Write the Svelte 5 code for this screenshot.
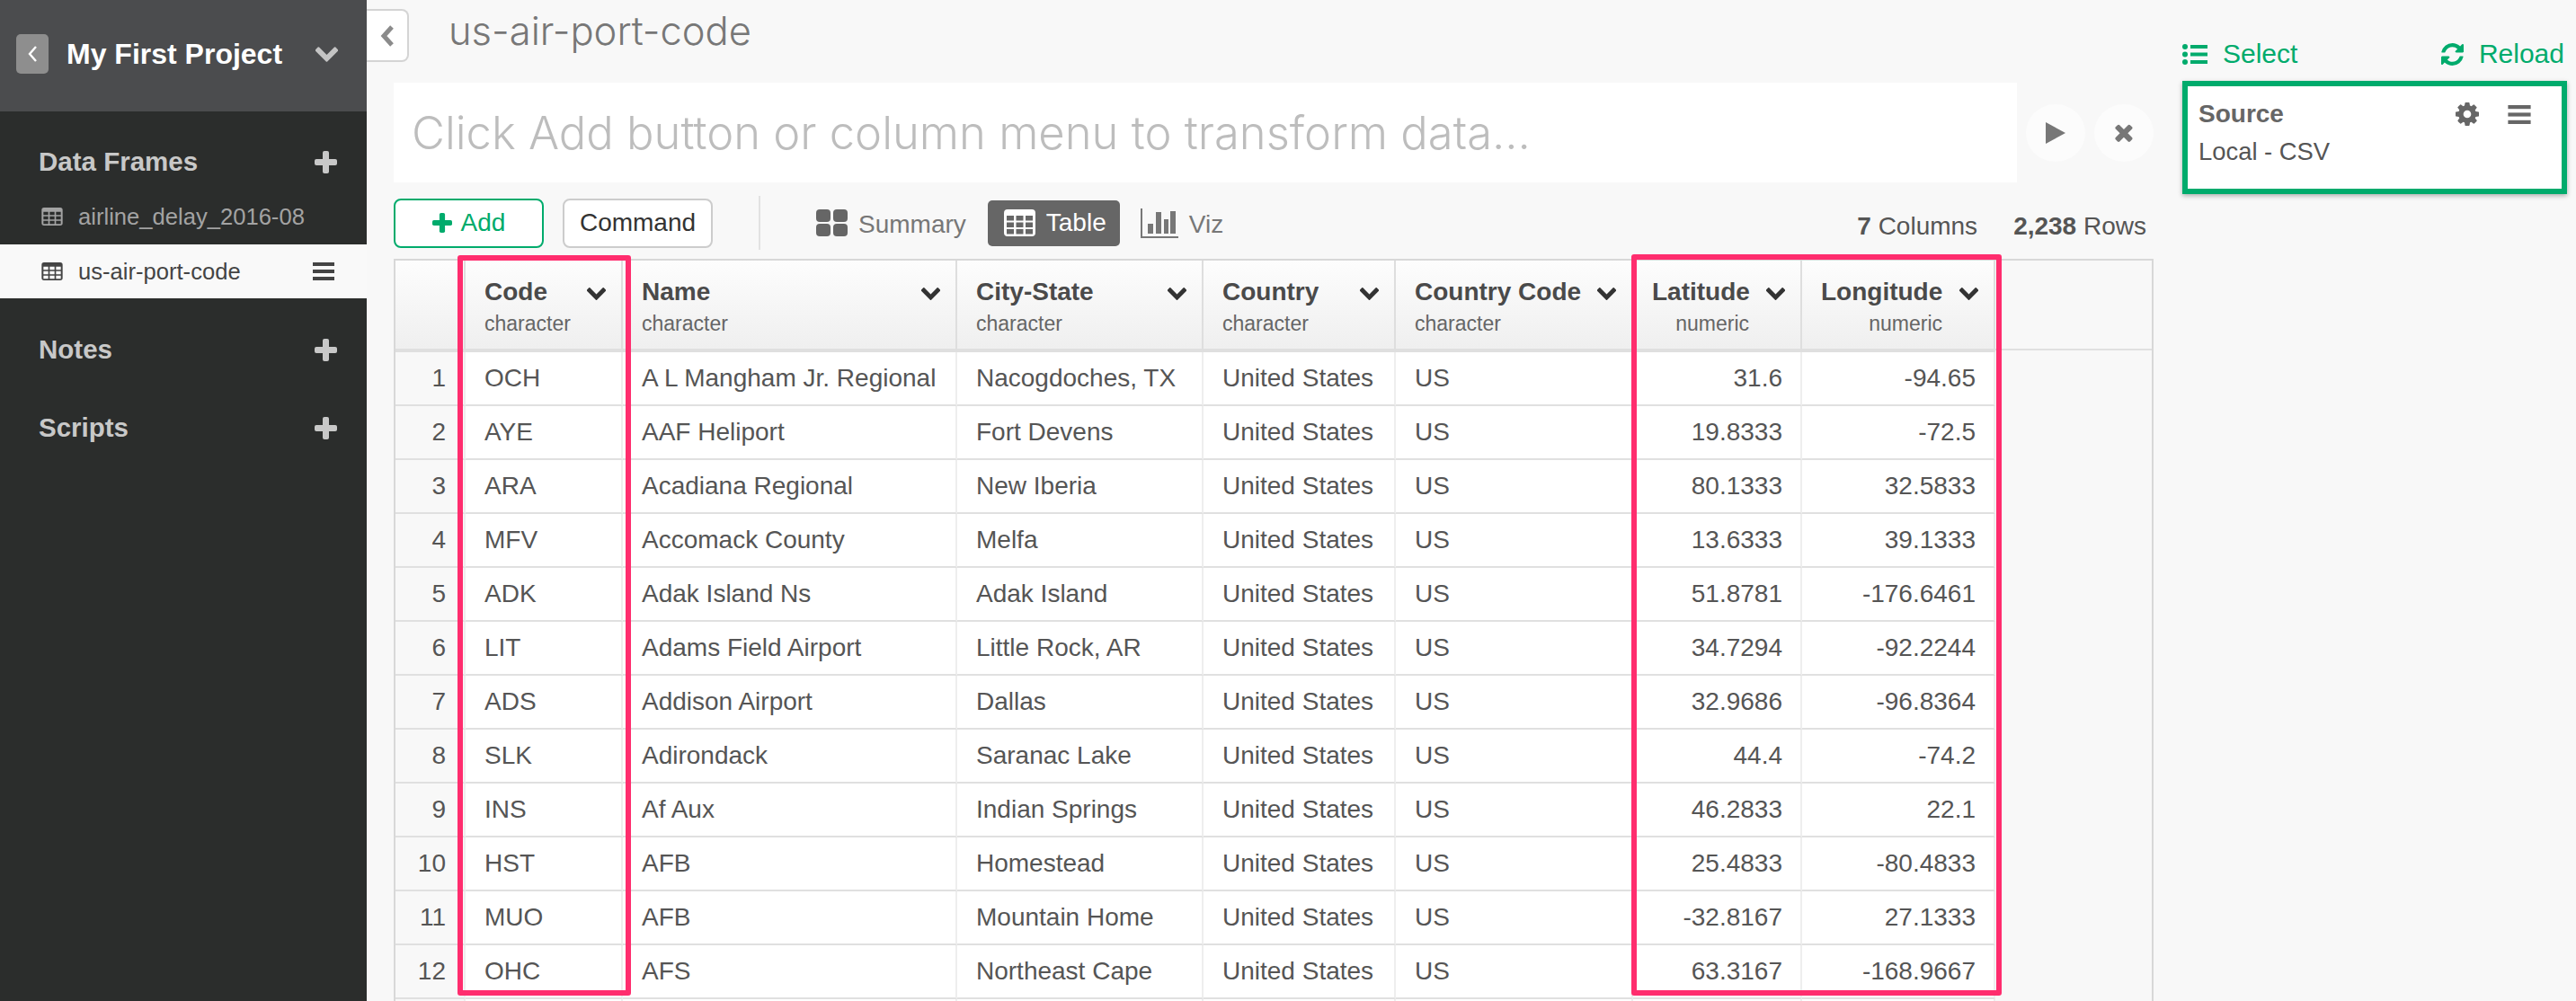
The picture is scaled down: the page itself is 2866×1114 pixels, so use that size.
<script>
  // table columns, widths in px; the blank filler column takes what is left
  const columns = [
    { name: 'Code', type: 'character', width: 175 },
    { name: 'Name', type: 'character', width: 372 },
    { name: 'City-State', type: 'character', width: 274 },
    { name: 'Country', type: 'character', width: 214 },
    { name: 'Country Code', type: 'character', width: 264 },
    { name: 'Latitude', type: 'numeric', width: 188 },
    { name: 'Longitude', type: 'numeric', width: 215 }
  ];

  const rows = [
    ['OCH', 'A L Mangham Jr. Regional', 'Nacogdoches, TX', 'United States', 'US', '31.6', '-94.65'],
    ['AYE', 'AAF Heliport', 'Fort Devens', 'United States', 'US', '19.8333', '-72.5'],
    ['ARA', 'Acadiana Regional', 'New Iberia', 'United States', 'US', '80.1333', '32.5833'],
    ['MFV', 'Accomack County', 'Melfa', 'United States', 'US', '13.6333', '39.1333'],
    ['ADK', 'Adak Island Ns', 'Adak Island', 'United States', 'US', '51.8781', '-176.6461'],
    ['LIT', 'Adams Field Airport', 'Little Rock, AR', 'United States', 'US', '34.7294', '-92.2244'],
    ['ADS', 'Addison Airport', 'Dallas', 'United States', 'US', '32.9686', '-96.8364'],
    ['SLK', 'Adirondack', 'Saranac Lake', 'United States', 'US', '44.4', '-74.2'],
    ['INS', 'Af Aux', 'Indian Springs', 'United States', 'US', '46.2833', '22.1'],
    ['HST', 'AFB', 'Homestead', 'United States', 'US', '25.4833', '-80.4833'],
    ['MUO', 'AFB', 'Mountain Home', 'United States', 'US', '-32.8167', '27.1333'],
    ['OHC', 'AFS', 'Northeast Cape', 'United States', 'US', '63.3167', '-168.9667']
  ];

  // grid glyph: rounded frame with 3x3 holes
  let gridPath = 'M4 0h27a4 4 0 0 1 4 4v22a4 4 0 0 1-4 4H4a4 4 0 0 1-4-4V4a4 4 0 0 1 4-4z';
  for (const y of [7, 14.5, 22]) {
    for (const x of [3, 13.5, 24]) {
      gridPath += `M${x} ${y}h8v5.5h-8z`;
    }
  }

  const chevronPath = 'M1683 808l-742 741q-19 19-45 19t-45-19l-742-741q-19-19-19-45.5t19-45.5l166-165q19-19 45-19t45 19l531 531 531-531q19-19 45-19t45 19l166 165q19 19 19 45.5t-19 45.5z';
</script>

{#snippet grid(cls)}
  <svg class={cls} viewBox="0 0 35 30"><path fill="currentColor" fill-rule="evenodd" d={gridPath} /></svg>
{/snippet}

{#snippet chevron()}
  <svg class="chevron" viewBox="109 533 1574 1035"><path fill="currentColor" d={chevronPath} /></svg>
{/snippet}

{#snippet plus(cls)}
  <svg class={cls} viewBox="0 0 25 25">
    <rect x="9" y="0" width="7" height="25" rx="2" fill="currentColor" />
    <rect x="0" y="9" width="25" height="7" rx="2" fill="currentColor" />
  </svg>
{/snippet}

{#snippet burger(cls)}
  <svg class={cls} viewBox="0 0 24 20">
    <rect width="24" height="4" y="0" fill="currentColor" />
    <rect width="24" height="4" y="8" fill="currentColor" />
    <rect width="24" height="4" y="16" fill="currentColor" />
  </svg>
{/snippet}

<div class="page">
  <aside class="sidebar">
    <header class="project">
      <span class="back">
        <svg viewBox="0 0 12 20" width="12" height="20"><path d="M10 2L3 10l7 8" fill="none" stroke="#fff" stroke-width="2.4" /></svg>
      </span>
      <span class="project-name">My First Project</span>
      <svg class="project-caret" viewBox="109 533 1574 1035"><path fill="currentColor" d={chevronPath} /></svg>
    </header>

    <div class="section first">
      <span>Data Frames</span>
      {@render plus('plus')}
    </div>
    <div class="item">
      {@render grid('item-icon')}
      <span>airline_delay_2016-08</span>
    </div>
    <div class="item active">
      {@render grid('item-icon')}
      <span>us-air-port-code</span>
      {@render burger('item-menu')}
    </div>
    <div class="section notes">
      <span>Notes</span>
      {@render plus('plus')}
    </div>
    <div class="section scripts">
      <span>Scripts</span>
      {@render plus('plus')}
    </div>
  </aside>

  <main class="main">
    <div class="title-row">
      <button class="collapse" aria-label="Collapse">
        <svg viewBox="0 0 16 24" width="16" height="24"><path d="M13 2L4 12l9 10" fill="none" stroke="#8b8b8b" stroke-width="5" /></svg>
      </button>
      <h1 class="title">us-air-port-code</h1>
    </div>

    <div class="command-row">
      <div class="command-input">Click Add button or column menu to transform data...</div>
      <button class="round" aria-label="Run">
        <svg viewBox="0 0 22 24" width="22" height="24"><path d="M0 0l22 12L0 24z" fill="#777" /></svg>
      </button>
      <button class="round" aria-label="Clear">
        <svg viewBox="300 260 1200 1300" width="20" height="21"><path fill="#777" d="M1490 1322q0 40-28 68l-136 136q-28 28-68 28t-68-28l-294-294-294 294q-28 28-68 28t-68-28l-136-136q-28-28-28-68t28-68l294-294-294-294q-28-28-28-68t28-68l136-136q28-28 68-28t68 28l294 294 294-294q28-28 68-28t68 28l136 136q28 28 28 68t-28 68l-294 294 294 294q28 28 28 68z" /></svg>
      </button>
    </div>

    <div class="toolbar">
      <button class="btn add">{@render plus('add-plus')}Add</button>
      <button class="btn">Command</button>
      <span class="divider"></span>
      <span class="tab summary">
        <svg viewBox="0 0 35 30" width="35" height="30" fill="#666">
          <rect width="16" height="14" rx="4" />
          <rect x="19" width="16" height="14" rx="4" />
          <rect y="16" width="16" height="14" rx="4" />
          <rect x="19" y="16" width="16" height="14" rx="4" />
        </svg>
        <span class="tab-text">Summary</span>
      </span>
      <span class="tab current">
        {@render grid('tab-grid')}
        Table
      </span>
      <span class="tab viz">
        <svg viewBox="0 0 42 33" width="42" height="33" fill="#777">
          <rect width="2" height="33" />
          <rect y="31" width="42" height="2" />
          <rect x="8" y="17" width="6" height="11" />
          <rect x="17" y="4" width="6" height="24" />
          <rect x="26" y="12" width="5" height="16" />
          <rect x="33" y="3" width="6" height="25" />
        </svg>
        <span class="tab-text">Viz</span>
      </span>
      <div class="stats">
        <span><b>7</b> Columns</span>
        <span><b>2,238</b> Rows</span>
      </div>
    </div>

    <div class="table-frame">
      <table>
        <colgroup>
          <col style="width: 78px" />
          {#each columns as col}
            <col style="width: {col.width}px" />
          {/each}
          <col />
        </colgroup>
        <thead>
          <tr>
            <th class="index-head"></th>
            {#each columns as col}
              <th class:num={col.type === 'numeric'}>
                <div class="head">
                  <div class="head-label">
                    <div class="head-name">{col.name}</div>
                    <div class="head-type">{col.type}</div>
                  </div>
                  {@render chevron()}
                </div>
              </th>
            {/each}
            <th class="filler"></th>
          </tr>
        </thead>
        <tbody>
          {#each rows as row, i}
            <tr>
              <td class="index">{i + 1}</td>
              {#each row as value, c}
                <td class:num={columns[c].type === 'numeric'}>{value}</td>
              {/each}
              <td class="filler"></td>
            </tr>
          {/each}
          <tr>
            <td class="index">&nbsp;</td>
            {#each columns as col}
              <td>&nbsp;</td>
            {/each}
            <td class="filler"></td>
          </tr>
        </tbody>
      </table>
    </div>

    <!-- pink highlight boxes over the table -->
    <div class="highlight code-box"></div>
    <div class="highlight geo-box"></div>
  </main>

  <section class="steps">
    <div class="steps-bar">
      <span class="link">
        <svg viewBox="0 0 28 23" width="28" height="23" fill="currentColor">
          <circle cx="3" cy="3" r="3" />
          <circle cx="3" cy="11.5" r="3" />
          <circle cx="3" cy="20" r="3" />
          <rect x="9" y="1" width="19" height="4" />
          <rect x="9" y="9.5" width="19" height="4" />
          <rect x="9" y="18" width="19" height="4" />
        </svg>
        Select
      </span>
      <span class="link">
        <svg viewBox="128 128 1536 1536" width="25" height="25"><path fill="currentColor" d="M1639 1056q0 5-1 7-64 268-268 434.5t-478 166.5q-146 0-282.5-55t-243.5-157l-129 129q-19 19-45 19t-45-19-19-45v-448q0-26 19-45t45-19h448q26 0 45 19t19 45-19 45l-137 137q71 66 161 102t187 36q134 0 250-65t186-179q11-17 53-117 8-23 30-23h192q13 0 22.5 9.5t9.5 22.5zm25-800v448q0 26-19 45t-45 19h-448q-26 0-45-19t-19-45 19-45l138-138q-148-137-349-137-134 0-250 65t-186 179q-11 17-53 117-8 23-30 23h-199q-13 0-22.5-9.5t-9.5-22.5v-7q65-268 270-434.5t480-166.5q146 0 284 55.5t245 156.5l130-129q19-19 45-19t45 19 19 45z" /></svg>
        Reload
      </span>
    </div>
    <div class="card">
      <div class="card-head">
        <span class="card-title">Source</span>
        <svg class="gear" viewBox="128 128 1536 1536" width="26" height="26"><path fill="currentColor" d="M1152 896q0-106-75-181t-181-75-181 75-75 181 75 181 181 75 181-75 75-181zm512-109v222q0 12-8 23t-20 13l-185 28q-19 54-39 91 35 50 107 138 10 12 10 25t-9 23q-27 37-99 108t-94 71q-12 0-26-9l-138-108q-44 23-91 38-16 136-29 186-7 28-36 28h-222q-14 0-24.5-8.5t-11.5-21.5l-28-184q-49-16-90-37l-141 107q-10 9-25 9-14 0-25-11-126-114-165-168-7-10-7-23 0-12 8-23 15-21 51-66.5t54-70.5q-27-50-41-99l-183-27q-13-2-21-12.5t-8-23.5v-222q0-12 8-23t19-13l186-28q14-46 39-92-40-57-107-138-10-12-10-24 0-10 9-23 26-36 98.5-107.5t94.5-71.5q13 0 26 10l138 107q44-23 91-38 16-136 29-186 7-28 36-28h222q14 0 24.5 8.5t11.5 21.5l28 184q49 16 90 37l142-107q9-9 24-9 13 0 25 10 129 119 165 170 7 8 7 22 0 12-8 23-15 21-51 66.5t-54 70.5q26 50 41 98l183 28q13 2 21 12.5t8 23.5z" /></svg>
        {@render burger('card-menu')}
      </div>
      <div class="card-sub">Local - CSV</div>
    </div>
  </section>
</div>

<style>
  :global(body) {
    margin: 0;
    background: #f8f8f8;
    font-family: "Liberation Sans", Arial, sans-serif;
  }

  button {
    font-family: inherit;
    cursor: pointer;
  }

  .page {
    display: flex;
    height: 1114px;
    overflow: hidden;
    background: #f8f8f8;
    color: #555;
  }

  /* sidebar */
  .sidebar {
    flex: 0 0 408px;
    background: #2b2d2c;
    color: #c8c8c8;
  }

  .project {
    display: flex;
    align-items: center;
    height: 124px;
    padding: 0 32px 4px 18px;
    box-sizing: border-box;
    background: #4b4c4e;
  }

  .back {
    display: flex;
    align-items: center;
    justify-content: center;
    width: 36px;
    height: 44px;
    border-radius: 5px;
    background: #8e8e8e;
  }

  .project-name {
    margin-left: 20px;
    font-size: 32px;
    font-weight: 700;
    color: #fff;
  }

  .project-caret {
    width: 25px;
    height: 17px;
    margin-left: auto;
    color: #c4c4c4;
  }

  .section {
    display: flex;
    align-items: center;
    justify-content: space-between;
    height: 60px;
    margin-top: 26px;
    padding: 0 33px 0 43px;
    font-size: 29.5px;
    font-weight: 700;
  }

  .section.first {
    margin-bottom: 2px;
  }

  .section.notes {
    margin-top: 27px;
  }

  .section.scripts {
    margin-top: 27px;
  }

  .plus {
    width: 25px;
    height: 25px;
  }

  .item {
    display: flex;
    align-items: center;
    gap: 17px;
    height: 60px;
    padding: 0 36px 2px 46px;
    box-sizing: border-box;
    font-size: 25.6px;
    color: #a3a3a3;
  }

  .item.active {
    padding-bottom: 0;
    background: #f9f9f9;
    color: #444;
  }

  .item-icon {
    width: 24px;
    height: 20px;
  }

  .item-menu {
    width: 24px;
    height: 20px;
    margin-left: auto;
  }

  /* main column */
  .main {
    position: relative;
    flex: 0 0 1988px;
    display: flex;
    flex-direction: column;
  }

  .title-row {
    display: flex;
    align-items: flex-start;
    height: 92px;
  }

  .collapse {
    display: flex;
    align-items: center;
    justify-content: center;
    width: 47px;
    height: 59px;
    margin-top: 10px;
    padding: 0;
    background: #fff;
    border: 2px solid #d4d4d4;
    border-left: none;
    border-radius: 0 8px 8px 0;
  }

  .title {
    margin: 8px 0 0 44px;
    font-family: Inter, "Liberation Sans", sans-serif;
    font-size: 43.5px;
    font-weight: 300;
    line-height: 52px;
    color: #777;
  }

  .command-row {
    display: flex;
    align-items: center;
    gap: 10px;
    height: 111px;
    margin-left: 30px;
  }

  .command-input {
    flex: 1;
    align-self: stretch;
    display: flex;
    align-items: center;
    padding-left: 20px;
    background: #fff;
    font-family: Inter, "Liberation Sans", sans-serif;
    font-size: 50.7px;
    font-weight: 300;
    color: #bdbdbd;
  }

  .round {
    display: flex;
    align-items: center;
    justify-content: center;
    width: 66px;
    height: 64px;
    padding: 0;
    border: none;
    border-radius: 50%;
    background: #fcfcfc;
  }

  .toolbar {
    display: flex;
    align-items: center;
    height: 58px;
    margin: 16px 0 11px 30px;
  }

  .btn {
    display: flex;
    align-items: center;
    justify-content: center;
    gap: 10px;
    width: 167px;
    height: 55px;
    margin-right: 21px;
    padding: 0;
    background: #fff;
    border: 2px solid #ccc;
    border-radius: 8px;
    font-size: 28px;
    color: #333;
  }

  .btn.add {
    border-color: #00ab6c;
    color: #00ab6c;
  }

  .add-plus {
    width: 22px;
    height: 22px;
  }

  .divider {
    width: 2px;
    height: 60px;
    margin: 0 62px 0 30px;
    background: #e2e2e2;
  }

  .tab {
    display: flex;
    align-items: center;
    gap: 12px;
    font-size: 28px;
    color: #777;
  }

  .tab-text {
    padding-top: 4px;
  }

  .tab.summary {
    margin-right: 24px;
  }

  .tab.current {
    height: 51px;
    padding: 0 15px 0 18px;
    border-radius: 5px;
    background: #666;
    color: #fff;
    margin-right: 23px;
  }

  .tab-grid {
    width: 35px;
    height: 30px;
  }

  .stats {
    display: flex;
    gap: 40px;
    margin-left: auto;
    padding: 7px 8px 0 0;
    font-size: 28px;
    color: #555;
  }

  /* data table */
  .table-frame {
    flex: 1;
    margin-left: 30px;
    min-height: 0;
    border: 2px solid #d8d8d8;
    border-bottom: none;
    overflow: hidden;
  }

  table {
    width: 100%;
    table-layout: fixed;
    border-collapse: separate;
    border-spacing: 0;
    font-size: 28px;
    color: #555;
  }

  th {
    height: 102px;
    padding: 0 17px 0 21px;
    box-sizing: border-box;
    background: linear-gradient(#fdfdfd, #efefef);
    border-right: 2px solid #dedede;
    border-bottom: 4px solid #dfdfdf;
    text-align: left;
    vertical-align: top;
    font-weight: 400;
  }

  th.index-head {
    padding: 0;
  }

  /* only a 2px line under the blank part of the header */
  th.filler {
    background: linear-gradient(#e0e0e0, #e0e0e0) no-repeat 0 98px / 100% 2px;
    border: none;
  }

  .head {
    display: flex;
    gap: 19px;
    padding-top: 19px;
  }

  .head-label {
    flex: 1;
    min-width: 0;
  }

  .head-name {
    font-size: 28px;
    font-weight: 700;
    line-height: 32px;
    white-space: nowrap;
    color: #4a4a4a;
  }

  .head-type {
    margin-top: 4px;
    font-size: 23px;
    line-height: 30px;
    color: #666;
  }

  .num .head-label {
    text-align: right;
  }

  .chevron {
    flex: none;
    width: 21px;
    height: 14px;
    margin-top: 11px;
    color: #333;
  }

  td {
    height: 60px;
    padding: 0 21px;
    box-sizing: border-box;
    background: #fff;
    border-right: 2px solid #eeeeee;
    border-bottom: 2px solid #e0e0e0;
    white-space: nowrap;
  }

  td.num {
    padding-right: 20px;
    text-align: right;
  }

  td.index {
    padding: 0 20px 0 0;
    background: #f8f8f8;
    text-align: right;
  }

  td.filler {
    background: none;
    border: none;
  }

  .highlight {
    position: absolute;
    box-sizing: border-box;
    border: 6px solid #ff2d6e;
    border-radius: 3px;
    pointer-events: none;
  }

  .code-box {
    left: 101px;
    top: 284px;
    width: 193px;
    height: 824px;
  }

  .geo-box {
    left: 1407px;
    top: 283px;
    width: 412px;
    height: 825px;
  }

  /* steps panel */
  .steps {
    flex: 0 0 428px;
    margin-left: 32px;
  }

  .steps-bar {
    display: flex;
    justify-content: space-between;
    align-items: flex-start;
    height: 90px;
    padding: 43px 3px 0 0;
    box-sizing: border-box;
  }

  .link {
    display: flex;
    align-items: center;
    gap: 17px;
    font-size: 30px;
    line-height: 34px;
    color: #00ab6c;
  }

  .card {
    height: 126px;
    padding: 15px 12px;
    box-sizing: border-box;
    background: #fff;
    border: 6px solid #00ab6c;
    box-shadow: 0 2px 5px rgba(0, 0, 0, 0.3);
  }

  .card-head {
    display: flex;
    align-items: center;
    height: 32px;
  }

  .card-title {
    font-size: 28px;
    font-weight: 700;
    color: #666;
  }

  .gear {
    margin-left: auto;
    color: #666;
  }

  .card-menu {
    width: 26px;
    height: 21px;
    margin: 0 22px 0 32px;
    color: #666;
  }

  .card-sub {
    margin-top: 10px;
    font-size: 27.4px;
    color: #555;
  }
</style>
